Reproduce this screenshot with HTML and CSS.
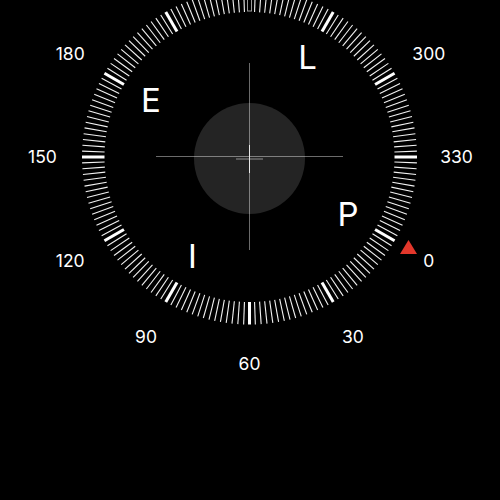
FILE: index.html
```html
<!DOCTYPE html>
<html>
<head>
<meta charset="utf-8">
<link rel="stylesheet" href="styles.css">
</head>
<body>
<div class="stage">
<svg class="compass" width="500" height="500" viewBox="0 0 500 500">
  <g id="ticks"></g>
  <rect class="north" x="247.5" y="-12" width="4" height="23"></rect>
  <circle class="bubble" cx="249.5" cy="158.5" r="55.5"></circle>
  <line class="cross" x1="156" y1="156.5" x2="343" y2="156.5"></line>
  <line class="cross" x1="249.5" y1="63" x2="249.5" y2="250"></line>
  <rect class="level" x="236" y="158" width="27" height="2"></rect>
  <line class="needle" x1="249.5" y1="145" x2="249.5" y2="173"></line>
  <polygon class="marker" points="408.5,240 400,254 417,254"></polygon>
  <g class="deg">
    <text x="428.8" y="266.9">0</text>
    <text x="353" y="342.7">30</text>
    <text x="249.5" y="370.4">60</text>
    <text x="146" y="342.7">90</text>
    <text x="70.2" y="266.9">120</text>
    <text x="42.5" y="163.4">150</text>
    <text x="70.2" y="59.9">180</text>
    <text x="428.8" y="59.9">300</text>
    <text x="456.5" y="163.4">330</text>
  </g>
  <g class="letters">
    <text x="307.5" y="69">L</text>
    <text x="151" y="112">E</text>
    <text x="348" y="226">P</text>
    <text x="192.5" y="268">I</text>
  </g>
</svg>
</div>
<script src="script.js"></script>
</body>
</html>
```
FILE: styles.css
```css
html, body {
  margin: 0;
  padding: 0;
  background: #000;
}
.stage {
  width: 500px;
  height: 500px;
  overflow: hidden;
  background: #000;
}
.compass {
  display: block;
}
.tick {
  stroke: #f2f2f2;
  stroke-width: 1.1;
}
.tick.major {
  stroke: #ffffff;
  stroke-width: 3;
}
.north {
  fill: none;
  stroke: #9a9a9a;
  stroke-width: 1;
}
.bubble {
  fill: #242424;
}
.cross {
  stroke: rgba(255, 255, 255, 0.42);
  stroke-width: 1;
}
.level {
  fill: #5a5a5a;
}
.needle {
  stroke: #e8e8e8;
  stroke-width: 1;
}
.marker {
  fill: #e3372b;
}
.deg text {
  font-family: Inter, "Liberation Sans", sans-serif;
  font-size: 17.5px;
  fill: #ffffff;
  text-anchor: middle;
}
.letters text {
  font-family: Inter, "Liberation Sans", sans-serif;
  font-size: 33px;
  font-weight: 400;
  fill: #ffffff;
  text-anchor: middle;
}
```
FILE: script.js
```js
(function () {
  var g = document.getElementById('ticks');
  var ns = 'http://www.w3.org/2000/svg';
  var cx = 249.5, cy = 157, r1 = 145, r2 = 167.5;
  for (var a = 0; a < 360; a += 2) {
    if (a === 270) continue;
    var rad = a * Math.PI / 180;
    var c = Math.cos(rad), s = Math.sin(rad);
    var l = document.createElementNS(ns, 'line');
    l.setAttribute('x1', (cx + r1 * c).toFixed(2));
    l.setAttribute('y1', (cy + r1 * s).toFixed(2));
    l.setAttribute('x2', (cx + r2 * c).toFixed(2));
    l.setAttribute('y2', (cy + r2 * s).toFixed(2));
    l.setAttribute('class', a % 30 === 0 ? 'tick major' : 'tick');
    g.appendChild(l);
  }
})();
```
